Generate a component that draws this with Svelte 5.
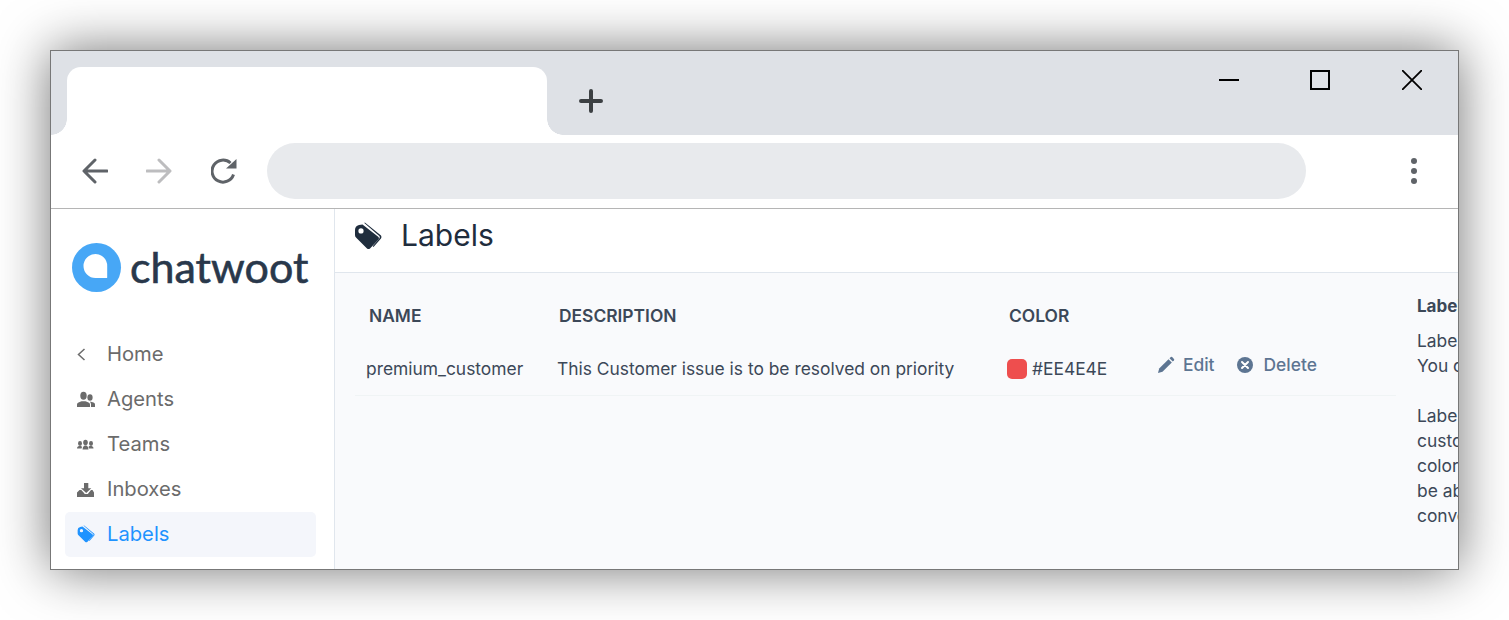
<script lang="ts">
	const navItems = [
		{ name: 'Home', icon: 'back' },
		{ name: 'Agents', icon: 'agents' },
		{ name: 'Teams', icon: 'teams' },
		{ name: 'Inboxes', icon: 'inbox' },
		{ name: 'Labels', icon: 'tag', active: true },
	];
</script>

{#snippet tagIcon()}
	<path
		fill-rule="evenodd"
		d="M1 8q0-4 4-5l3.500-.5L24.500 15q1 1 0 2.500L16 26.500q-1.500 1-3 0L2 15.500q-1-1-1-2.500zM7 6.300a2.600 2.600 0 1 0 0 5.200a2.600 2.600 0 0 0 0-5.200z"
	/>
	<path d="M10 .8h1.200L27 13.500q1 1.500 0 3L19.500 25l-.8-.8 6.800-8q.8-1.200-.2-2.200z" />
{/snippet}

<div class="window">
	<div class="tab-strip">
		<div class="tab"></div>
		<svg class="new-tab" viewBox="0 0 24 24" width="24" height="24">
			<path d="M12 2v20M2 12h20" stroke="#3c4043" stroke-width="4" stroke-linecap="round" />
		</svg>
		<div class="window-controls">
			<svg viewBox="0 0 20 20" width="20" height="20"><path d="M0 10h20" stroke="#000" stroke-width="2" /></svg>
			<svg viewBox="0 0 20 20" width="20" height="20"><path d="M1 1h18v18H1z" fill="none" stroke="#000" stroke-width="2" /></svg>
			<svg viewBox="0 0 20 20" width="20" height="20"><path d="M0 0l20 20M20 0L0 20" stroke="#000" stroke-width="1.800" /></svg>
		</div>
	</div>

	<div class="toolbar">
		<svg class="tool" viewBox="0 0 26 26" width="26" height="26">
			<path d="M25 13H2.500M13 2L2 13l11 11" fill="none" stroke="#5f6368" stroke-width="3" stroke-linecap="round" stroke-linejoin="round" />
		</svg>
		<svg class="tool" viewBox="0 0 26 26" width="26" height="26">
			<path d="M1 13h22.500M13 2l11 11-11 11" fill="none" stroke="#bdbdbf" stroke-width="3" stroke-linecap="round" stroke-linejoin="round" />
		</svg>
		<svg class="tool" viewBox="0 0 26 26" width="26" height="26">
			<path d="M22.500 16.500A11 11 0 1 1 19.500 5" fill="none" stroke="#5f6368" stroke-width="3" />
			<path d="M15 10.500L25.500 1v9.500z" fill="#5f6368" />
		</svg>
		<div class="address"></div>
		<div class="menu-dots"><i></i><i></i><i></i></div>
	</div>

	<div class="app">
		<aside class="sidebar">
			<div class="brand">
				<svg viewBox="0 0 50 50" width="50" height="50">
					<circle cx="24.500" cy="24.500" r="24.500" fill="#47a7f6" />
					<path d="M23.500 11a12 12 0 0 0 0 24h11.200a.5.5 0 0 0 .5-.5V23a12 12 0 0 0-11.700-12z" fill="#fff" />
				</svg>
				<span>chatwoot</span>
			</div>
			<nav>
				{#each navItems as item}
					<div class="nav-item" class:active={item.active}>
						<svg class="nav-icon" viewBox="0 0 18 18" width="18" height="18">
							{#if item.icon === 'back'}
								<path d="M7.500 4L1.500 9.500l6 5.500" fill="none" stroke="currentColor" stroke-width="1.500" />
							{:else if item.icon === 'agents'}
								<ellipse cx="6.500" cy="5.800" rx="3.200" ry="4" />
								<path d="M0 17v-2.500q0-1.500 1.500-2l3-1.200h4l3 1.200q1.500.5 1.500 2V17z" />
								<ellipse cx="13" cy="7.500" rx="2.600" ry="3.300" />
								<path d="M13 11.500l3.500 1q1.500.5 1.500 2V17h-4v-3z" />
							{:else if item.icon === 'teams'}
								<ellipse cx="8.500" cy="7.500" rx="2.300" ry="2.800" />
								<path d="M5.500 14.500l.5-2.500 1.500-1.500h2l1.500 1.500.5 2.500z" />
								<ellipse cx="3" cy="8.500" rx="2" ry="2.400" />
								<path d="M0 13.500l.3-1.500 1.500-1h2.400l.8 1-.5 1.500z" />
								<ellipse cx="14" cy="8.500" rx="2" ry="2.400" />
								<path d="M12 13.500l-.5-1.500.8-1h2.400l1.500 1 .3 1.500z" />
							{:else if item.icon === 'inbox'}
								<path d="M7 3h4.300v5.300h3L9.200 13 4 8.300h3z" />
								<path d="M2.500 10h1.800l3.200 3.500-.2.500h3.500l3.200-4h1.500L17 12.500V17H0v-4.500z" />
							{:else}
								<g transform="scale(.64)">
									{@render tagIcon()}
								</g>
							{/if}
						</svg>
						<span>{item.name}</span>
					</div>
				{/each}
			</nav>
		</aside>

		<main class="main">
			<header class="page-header">
				<svg viewBox="0 0 28 28" width="28" height="28">
					{@render tagIcon()}
				</svg>
				<h1>Labels</h1>
			</header>

			<div class="page-body">
				<div class="table-wrap">
					<div class="table-head">
						<span>NAME</span>
						<span>DESCRIPTION</span>
						<span>COLOR</span>
					</div>
					<div class="table-row">
						<span>premium_customer</span>
						<span>This Customer issue is to be resolved on priority</span>
						<span class="color-cell"><i class="swatch"></i>#EE4E4E</span>
						<span class="actions">
							<span class="action">
								<svg viewBox="0 0 18 18" width="18" height="18">
									<path d="M1 17l1.200-4.500L11.500 3.200l3.300 3.300L5.500 15.800z" fill="#5d7592" />
									<path d="M12.500 2.200l1.300-1.200q.7-.5 1.300 0l1.900 1.900q.5.6 0 1.300l-1.200 1.300z" fill="#5d7592" />
								</svg>
								Edit
							</span>
							<span class="action">
								<svg viewBox="0 0 18 18" width="18" height="18">
									<circle cx="9" cy="9" r="8" fill="#5d7592" />
									<path d="M6 6l6 6M12 6l-6 6" stroke="#fff" stroke-width="2" stroke-linecap="round" />
								</svg>
								Delete
							</span>
						</span>
					</div>
				</div>

				<aside class="help">
					<h2>Labels</h2>
					<p>Labels help you to categorize conversations and prioritize them.<br />You can assign label to a conversation from the sidepanel.</p>
					<p>Labels are tied to the account and can be used to create<br />custom workflows in your organization. You can assign custom<br />color to a label, it makes it easier to identify the label. You will<br />be able to display the label on the sidebar to filter the<br />conversations easily.</p>
				</aside>
			</div>
		</main>
	</div>
</div>

<style>
	:global(body) {
		margin: 0;
		background: #fff;
		overflow: hidden;
	}

	.window {
		box-sizing: border-box;
		width: 1409px;
		height: 520px;
		margin: 50px;
		border: 1px solid #777;
		background: #fff;
		box-shadow: 0 0 50px rgba(0, 0, 0, 0.55);
		display: flex;
		flex-direction: column;
		overflow: hidden;
		font-family: Inter, sans-serif;
	}

	.tab-strip {
		height: 84px;
		flex-shrink: 0;
		background: #dee1e6;
		display: flex;
		align-items: flex-end;
		padding-left: 16px;
	}

	.tab {
		position: relative;
		width: 480px;
		height: 68px;
		background: #fff;
		border-radius: 14px 14px 0 0;
	}

	.tab::before,
	.tab::after {
		content: '';
		position: absolute;
		bottom: 0;
		width: 16px;
		height: 16px;
	}

	.tab::before {
		left: -16px;
		background: radial-gradient(circle at 0 0, #dee1e6 15.500px, #fff 16px);
	}

	.tab::after {
		right: -16px;
		background: radial-gradient(circle at 100% 0, #dee1e6 15.500px, #fff 16px);
	}

	.new-tab {
		margin: 0 0 22px 32px;
	}

	.window-controls {
		margin-left: auto;
		align-self: flex-start;
		display: flex;
		gap: 71px;
		padding: 19px 36px 0 0;
	}

	.window-controls svg:last-child {
		margin-left: 1px;
	}

	.toolbar {
		height: 73px;
		flex-shrink: 0;
		box-sizing: border-box;
		display: flex;
		align-items: center;
		padding: 0 0 2px 30px;
		background: #fff;
	}

	.tool {
		margin-right: 38px;
	}

	.tool:nth-child(1) {
		margin-left: 1px;
	}

	.tool:nth-child(3) {
		margin-left: 1px;
		margin-right: 30px;
	}

	.address {
		width: 1039px;
		height: 56px;
		border-radius: 28px;
		background: #e8eaed;
	}

	.menu-dots {
		margin-left: 105px;
		display: flex;
		flex-direction: column;
		gap: 4px;
	}

	.menu-dots i {
		width: 6px;
		height: 6px;
		border-radius: 50%;
		background: #5f6368;
	}

	.app {
		flex: 1;
		min-height: 0;
		display: flex;
		border-top: 1px solid #b5b5b5;
	}

	.sidebar {
		width: 284px;
		flex-shrink: 0;
		box-sizing: border-box;
		border-right: 1px solid #e0e6ed;
		background: #fff;
		padding: 34px 18px 0 14px;
	}

	.brand {
		display: flex;
		align-items: center;
		gap: 8px;
		padding-left: 7px;
		height: 50px;
		color: #29384b;
		font-family: Lato, sans-serif;
		font-size: 43px;
		font-weight: 400;
		-webkit-text-stroke: 0.6px #29384b;
	}

	.brand span {
		margin-top: -3px;
	}

	nav {
		margin-top: 39px;
		display: flex;
		flex-direction: column;
	}

	.nav-item {
		height: 45px;
		box-sizing: border-box;
		display: flex;
		align-items: center;
		gap: 12px;
		padding: 0 0 2px 12px;
		border-radius: 5px;
		color: #6b6b6b;
		font-size: 20.200px;
	}

	.nav-item.active {
		background: #f4f6fb;
		color: #1f93ff;
	}

	.nav-icon {
		flex-shrink: 0;
		fill: currentColor;
	}

	.main {
		flex: 1;
		min-width: 0;
		display: flex;
		flex-direction: column;
		background: #f9fafc;
	}

	.page-header {
		height: 64px;
		flex-shrink: 0;
		box-sizing: border-box;
		border-bottom: 1px solid #e0e6ed;
		background: #fff;
		display: flex;
		align-items: center;
		gap: 19px;
		padding: 0 0 12px 19px;
		color: #1f2d3d;
	}

	.page-header svg {
		fill: currentColor;
		margin-top: 2px;
	}

	h1 {
		margin: 0;
		font-size: 30px;
		font-weight: 400;
	}

	.page-body {
		flex: 1;
		display: flex;
		padding: 20px 0 0 20px;
	}

	.table-wrap {
		width: 1041px;
		flex-shrink: 0;
	}

	.table-head,
	.table-row {
		display: grid;
		grid-template-columns: 191px 450px 150px 1fr;
		align-items: center;
	}

	.table-head {
		height: 44px;
		padding-left: 14px;
		font-size: 17.400px;
		font-weight: 600;
		color: #3c4858;
		grid-template-columns: 190px 450px 150px 1fr;
	}

	.table-row {
		height: 59px;
		box-sizing: border-box;
		padding: 5px 0 0 11px;
		border-bottom: 1px solid #f0f4f5;
		font-size: 17.400px;
		color: #3c4858;
	}

	.color-cell {
		display: flex;
		align-items: center;
		gap: 5px;
	}

	.swatch {
		width: 20px;
		height: 20px;
		border-radius: 5px;
		background: #ee4e4e;
	}

	.actions {
		display: flex;
		gap: 21px;
		margin-bottom: 8px;
	}

	.action {
		display: flex;
		align-items: center;
		gap: 8px;
		color: #5d7592;
		font-weight: 500;
	}

	.action:last-child {
		gap: 10px;
	}

	.help {
		flex-shrink: 0;
		width: 520px;
		margin-left: 21px;
		font-size: 17.400px;
		line-height: 25px;
		color: #3c4858;
	}

	h2 {
		margin: 1px 0 9px;
		font-size: 17px;
		font-weight: 700;
		line-height: 25px;
	}

	p {
		margin: 0 0 25px;
		white-space: nowrap;
	}
</style>
